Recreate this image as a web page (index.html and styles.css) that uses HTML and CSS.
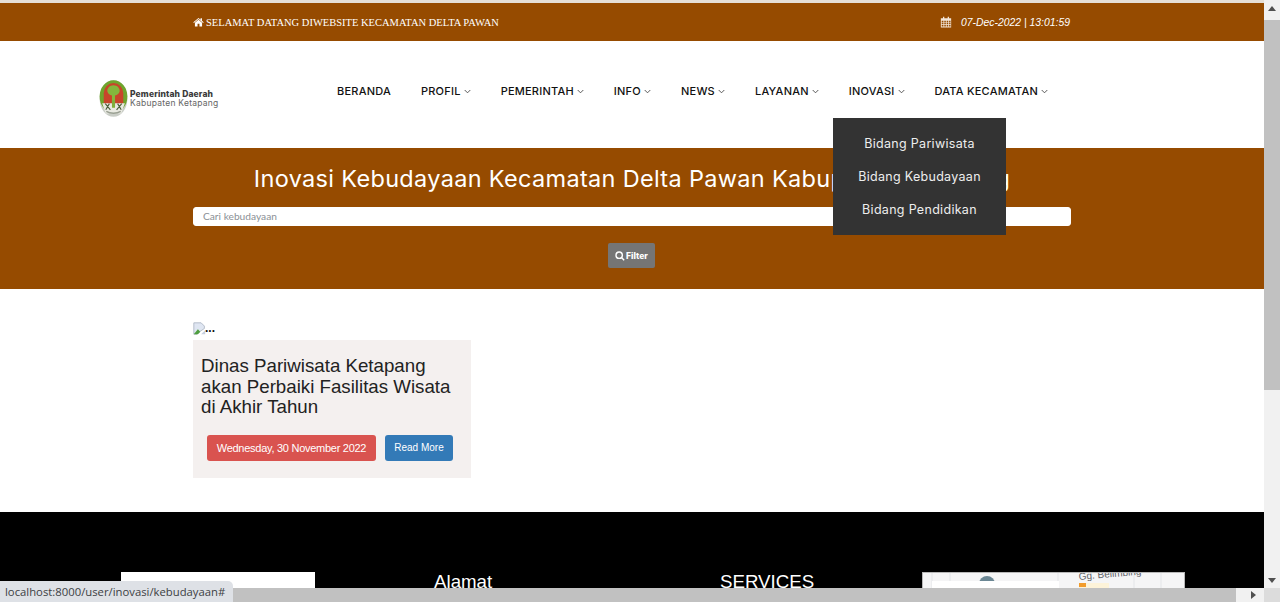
FILE: index.html
```html
<!DOCTYPE html>
<html lang="id">
<head>
<meta charset="utf-8">
<title>Inovasi Kebudayaan</title>
<link rel="stylesheet" href="styles.css">
</head>
<body>
<div class="window">
  <div class="page">
    <div class="topbar">
      <div class="welcome">
        <svg class="ico-home" viewBox="0 0 16 14"><path d="M8 1 .5 7.4l.8.9L8 2.7l6.7 5.6.8-.9L13 5.3V1.6h-2v2L8 1zM8 3.9 2.8 8.2V13.5h3.8V9.7h2.8v3.8h3.8V8.2L8 3.9z"/></svg>
        <span>SELAMAT DATANG DIWEBSITE KECAMATAN DELTA PAWAN</span>
      </div>
      <div class="clock">
        <svg class="ico-cal" viewBox="0 0 14 14"><path d="M1 2.5h2.5V1h1.5v1.5h4V1h1.500v1.500H13v11H1zM2 5.500v1.700h2V5.500zm3 0v1.700h1.800V5.500zm2.800 0v1.700h1.800V5.500zm2.800 0v1.700h1.700V5.500zM2 8v1.700h2V8zm3 0v1.700h1.800V8zm2.800 0v1.700h1.800V8zm2.800 0v1.700h1.700V8zM2 10.500v1.800h2v-1.800zm3 0v1.800h1.800v-1.800zm2.800 0v1.800h1.800v-1.800zm2.800 0v1.800h1.700v-1.800z"/></svg>
        <span>07-Dec-2022 | 13:01:59</span>
      </div>
    </div>

    <header class="header">
      <div class="logo">
        <svg class="emblem" viewBox="0 0 28 36">
          <ellipse cx="14" cy="18" rx="13.500" ry="17.800" fill="#c9cdc6"/>
          <ellipse cx="14" cy="16" rx="13.500" ry="15.800" fill="#6fa52d"/>
          <path d="M4.500 24V13a9.500 10 0 0 1 19 0v11z" fill="#c8452a"/>
          <path d="M14 5c3.800 0 6 2.800 6 5.500 0 2.600-2.500 4.200-4.500 4.500v8h-3v-8c-2-.3-4.500-1.900-4.500-4.500C8 7.800 10.200 5 14 5z" fill="#84b63c"/>
          <path d="M3 22.500h22l-3.500 10h-15z" fill="#e9eae2"/>
          <path d="M12.500 20h3v7h-3z" fill="#7faf3a"/>
          <path d="M6 23l5 6M22 23l-5 6M10 23l-3.500 6M18 23l3.500 6" stroke="#4d5f3a" stroke-width="1.100" fill="none"/>
          <path d="M7 30.500c4 2.500 10 2.500 14 0" stroke="#9aa093" stroke-width="1.400" fill="none"/>
        </svg>
        <div class="logo-text">
          <span class="logo-top">Pemerintah Daerah</span>
          <span class="logo-bottom">Kabupaten Ketapang</span>
        </div>
      </div>
      <nav class="nav">
        <a class="nav-item">BERANDA</a>
        <a class="nav-item">PROFIL<svg class="chev" viewBox="0 0 8 5"><path d="M.8.8 4 4 7.200.8"/></svg></a>
        <a class="nav-item">PEMERINTAH<svg class="chev" viewBox="0 0 8 5"><path d="M.8.8 4 4 7.200.8"/></svg></a>
        <a class="nav-item">INFO<svg class="chev" viewBox="0 0 8 5"><path d="M.8.8 4 4 7.200.8"/></svg></a>
        <a class="nav-item">NEWS<svg class="chev" viewBox="0 0 8 5"><path d="M.8.8 4 4 7.200.8"/></svg></a>
        <a class="nav-item">LAYANAN<svg class="chev" viewBox="0 0 8 5"><path d="M.8.8 4 4 7.200.8"/></svg></a>
        <a class="nav-item">INOVASI<svg class="chev" viewBox="0 0 8 5"><path d="M.8.8 4 4 7.200.8"/></svg></a>
        <a class="nav-item">DATA KECAMATAN<svg class="chev" viewBox="0 0 8 5"><path d="M.8.8 4 4 7.200.8"/></svg></a>
      </nav>
    </header>

    <section class="hero">
      <h1 class="hero-title">Inovasi Kebudayaan Kecamatan Delta Pawan Kabupaten Ketapang</h1>
      <input class="search" type="text" placeholder="Cari kebudayaan">
      <button class="filter" type="button">
        <svg class="ico-search" viewBox="0 0 12 12"><circle cx="5" cy="5" r="3.800"/><path d="m7.800 7.800 3.200 3.200"/></svg>Filter
      </button>
    </section>

    <main class="content">
      <div class="broken">
        <svg class="ico-broken" viewBox="0 0 16 16">
          <path d="M1 1h9l4 4v3L8 12l-3 3H1z" fill="#dfe6f2" stroke="#aab3c0"/>
          <path d="M1 15l5-6 3 3-3 3z" fill="#4f9e3f"/>
          <path d="M10 15l5-5v5z" fill="#c6d0e0"/>
        </svg><b class="broken-alt">...</b>
      </div>
      <article class="card">
        <h2 class="card-title">Dinas Pariwisata Ketapang akan Perbaiki Fasilitas Wisata di Akhir Tahun</h2>
        <div class="card-actions">
          <span class="btn btn-date">Wednesday, 30 November 2022</span>
          <a class="btn btn-more">Read More</a>
        </div>
      </article>
    </main>

    <footer class="footer">
      <div class="foot-logo"></div>
      <h3 class="foot-head foot-alamat">Alamat</h3>
      <h3 class="foot-head foot-services">SERVICES</h3>
      <div class="foot-map">
        <svg class="map-art" viewBox="0 0 261 16">
          <path d="M9 0v16M27 0v16M135 0v16M211 0v16M238 0v16" stroke="#e3e5e8" fill="none"/>
          <circle cx="64" cy="11" r="8" fill="#6b8794"/>
          <circle cx="64" cy="12" r="3.500" fill="#fff"/>
          <rect x="9" y="8" width="127" height="8" fill="#fff"/>
          <rect x="156" y="10" width="30" height="6" fill="#fdf3d9"/>
          <rect x="156" y="10" width="7" height="4" fill="#f29c2b"/>
          <text x="156" y="7" class="map-label" transform="rotate(-5 156 7)">Gg. Belimbing</text>
        </svg>
      </div>
    </footer>
  </div>

  <div class="dropdown">
    <a class="drop-item">Bidang Pariwisata</a>
    <a class="drop-item">Bidang Kebudayaan</a>
    <a class="drop-item">Bidang Pendidikan</a>
  </div>

  <div class="vbar">
    <svg class="arrow" viewBox="0 0 16 17"><path d="M8 6 4 11h8z"/></svg>
    <div class="vthumb"></div>
    <div class="vspace"></div>
    <svg class="arrow" viewBox="0 0 16 17"><path d="M4 7h8l-4 5z"/></svg>
  </div>
  <div class="hbar">
    <div class="hthumb"></div>
    <svg class="harrow" viewBox="0 0 17 14"><path d="M6 3v8l5-4z"/></svg>
  </div>
  <div class="corner"></div>
  <div class="status">localhost:8000/user/inovasi/kebudayaan#</div>
</div>
</body>
</html>
```

FILE: styles.css
```css
* { box-sizing: border-box; }
html, body { margin: 0; height: 100%; overflow: hidden; background: #fff; }
body { font-family: "Liberation Sans", Arial, sans-serif; }

.window {
  position: relative;
  width: 1280px;
  height: 602px;
  overflow: hidden;
  display: grid;
  grid-template-columns: 1264px 16px;
  grid-template-rows: 588px 14px;
}
.page { overflow: hidden; padding-top: 3px; background: #fff; box-shadow: inset 0 3px 0 #e6dfd6; }

.topbar {
  height: 38px;
  background: #964b00;
  color: #fff;
  padding: 0 193px;
  display: flex;
  justify-content: space-between;
  align-items: center;
}
.welcome { display: flex; align-items: center; gap: 2px; font-family: "Liberation Serif", serif; font-size: 10.500px; }
.ico-home { width: 11px; height: 10px; fill: #fff; }
.clock { display: flex; align-items: center; gap: 9px; margin-right: 1px; font-size: 10.400px; font-style: italic; }
.ico-cal { width: 12px; height: 12px; fill: #f3e6d8; }

.header { height: 107px; display: flex; align-items: center; padding-left: 99px; background: #fff; }
.logo { display: flex; align-items: center; gap: 2px; width: 238px; margin-top: 8px; }
.emblem { width: 29px; height: 37px; }
.logo-text { display: flex; flex-direction: column; font-family: Inter, sans-serif; font-size: 8.500px; line-height: 9px; color: #666; white-space: nowrap; }
.logo-top { font-weight: 800; color: #3a3a3a; letter-spacing: .15px; }
.logo-bottom { letter-spacing: .25px; }
.nav { display: flex; gap: 30px; margin-top: -8px; }
.nav-item {
  display: flex;
  align-items: center;
  font-family: Inter, sans-serif;
  font-size: 11px;
  font-weight: 500;
  letter-spacing: .22px;
  color: #111;
  white-space: nowrap;
}
.chev { width: 7px; height: 5px; margin: 1px 0 0 3px; fill: none; stroke: #444; stroke-width: 1; }

.hero {
  height: 141px;
  background: #964b00;
  padding: 0 193px;
  display: flex;
  flex-direction: column;
  align-items: center;
}
.hero-title {
  margin: 16px 0 0;
  font-family: Inter, sans-serif;
  font-weight: 400;
  font-size: 23.500px;
  letter-spacing: .32px;
  line-height: 30px;
  color: #fff;
  white-space: nowrap;
}
.search {
  width: 100%;
  height: 19px;
  margin-top: 13px;
  padding: 0 9px 2px;
  border: 1px solid #fff;
  border-radius: 3px;
  background: #fff;
  font-family: Lato, sans-serif;
  font-size: 10.200px;
}
.search::placeholder { color: #8b9096; opacity: 1; }
.filter {
  display: flex;
  align-items: center;
  justify-content: center;
  gap: 1px;
  width: 47px;
  height: 25px;
  margin-top: 17px;
  margin-left: -1px;
  border: 0;
  padding: 0;
  border-radius: 2px;
  background: #757575;
  color: #fff;
  font-family: Inter, sans-serif;
  font-size: 8.500px;
  font-weight: 800;
}
.ico-search { width: 10px; height: 10px; fill: none; stroke: #fff; stroke-width: 1.700; }

.content { height: 223px; padding: 33px 0 0 193px; }
.broken { display: flex; align-items: flex-end; height: 13px; margin-bottom: 5px; color: #111; }
.broken-alt { font-size: 12px; line-height: 13px; margin-left: -1px; }
.ico-broken { width: 13px; height: 13px; }
.card { width: 278px; height: 138px; background: #f4f0ef; padding: 16px 8px 0; }
.card-title { margin: 0; font-size: 18.720px; font-weight: 400; line-height: 20.500px; color: #222; }
.card-actions { display: flex; gap: 9px; margin: 17px 0 0 6px; }
.btn { display: flex; align-items: center; height: 26px; border-radius: 3px; color: #fff; white-space: nowrap; }
.btn-date { width: 169px; justify-content: center; background: #d9534f; font-size: 11px; letter-spacing: -.27px; }
.btn-more { width: 68px; justify-content: center; background: #337ab7; font-size: 10px; }

.footer { height: 90px; background: #000; padding: 60px 0 0 121px; display: flex; align-items: flex-start; }
.foot-logo { width: 194px; height: 30px; background: #fff; }
.foot-head { margin: 0; color: #fff; font-size: 18.720px; font-weight: 400; line-height: 20px; }
.foot-alamat { margin-left: 119px; width: 286px; }
.foot-services { width: 202px; }
.foot-map { width: 263px; height: 30px; background: #f5f5f6; border: 1px solid #b8b8b8; border-bottom: 0; overflow: hidden; }
.map-art { display: block; width: 261px; height: 16px; }
.map-label { font-family: "Liberation Sans", sans-serif; font-size: 10px; fill: #5f6368; }

.dropdown {
  position: absolute;
  left: 833px;
  top: 118px;
  width: 173px;
  height: 117px;
  padding: 9px 0;
  background: #333;
  display: flex;
  flex-direction: column;
  z-index: 5;
}
.drop-item {
  height: 33px;
  display: flex;
  align-items: center;
  justify-content: center;
  color: #eee;
  font-family: Inter, sans-serif;
  font-size: 12.500px;
  letter-spacing: .3px;
  white-space: nowrap;
}

.vbar { background: #f1f1f1; display: flex; flex-direction: column; }
.arrow { width: 16px; height: 17px; fill: #505050; flex: none; }
.vthumb { height: 370px; background: #c1c1c1; flex: none; margin-top: 3px; }
.vspace { flex: 1; }
.hbar { background: #f1f1f1; display: flex; align-items: stretch; justify-content: space-between; }
.hthumb { width: 1236px; background: #c1c1c1; }
.harrow { width: 17px; height: 14px; fill: #505050; margin-right: 2px; }
.corner { background: #dcdcdc; }

.status {
  position: absolute;
  left: 0;
  bottom: 0;
  height: 21px;
  padding: 0 8px 0 5px;
  display: flex;
  align-items: center;
  background: #dee1e6;
  border-top-right-radius: 5px;
  color: #3c4043;
  font-family: "Open Sans", sans-serif;
  font-size: 11.300px;
  z-index: 6;
}
```
